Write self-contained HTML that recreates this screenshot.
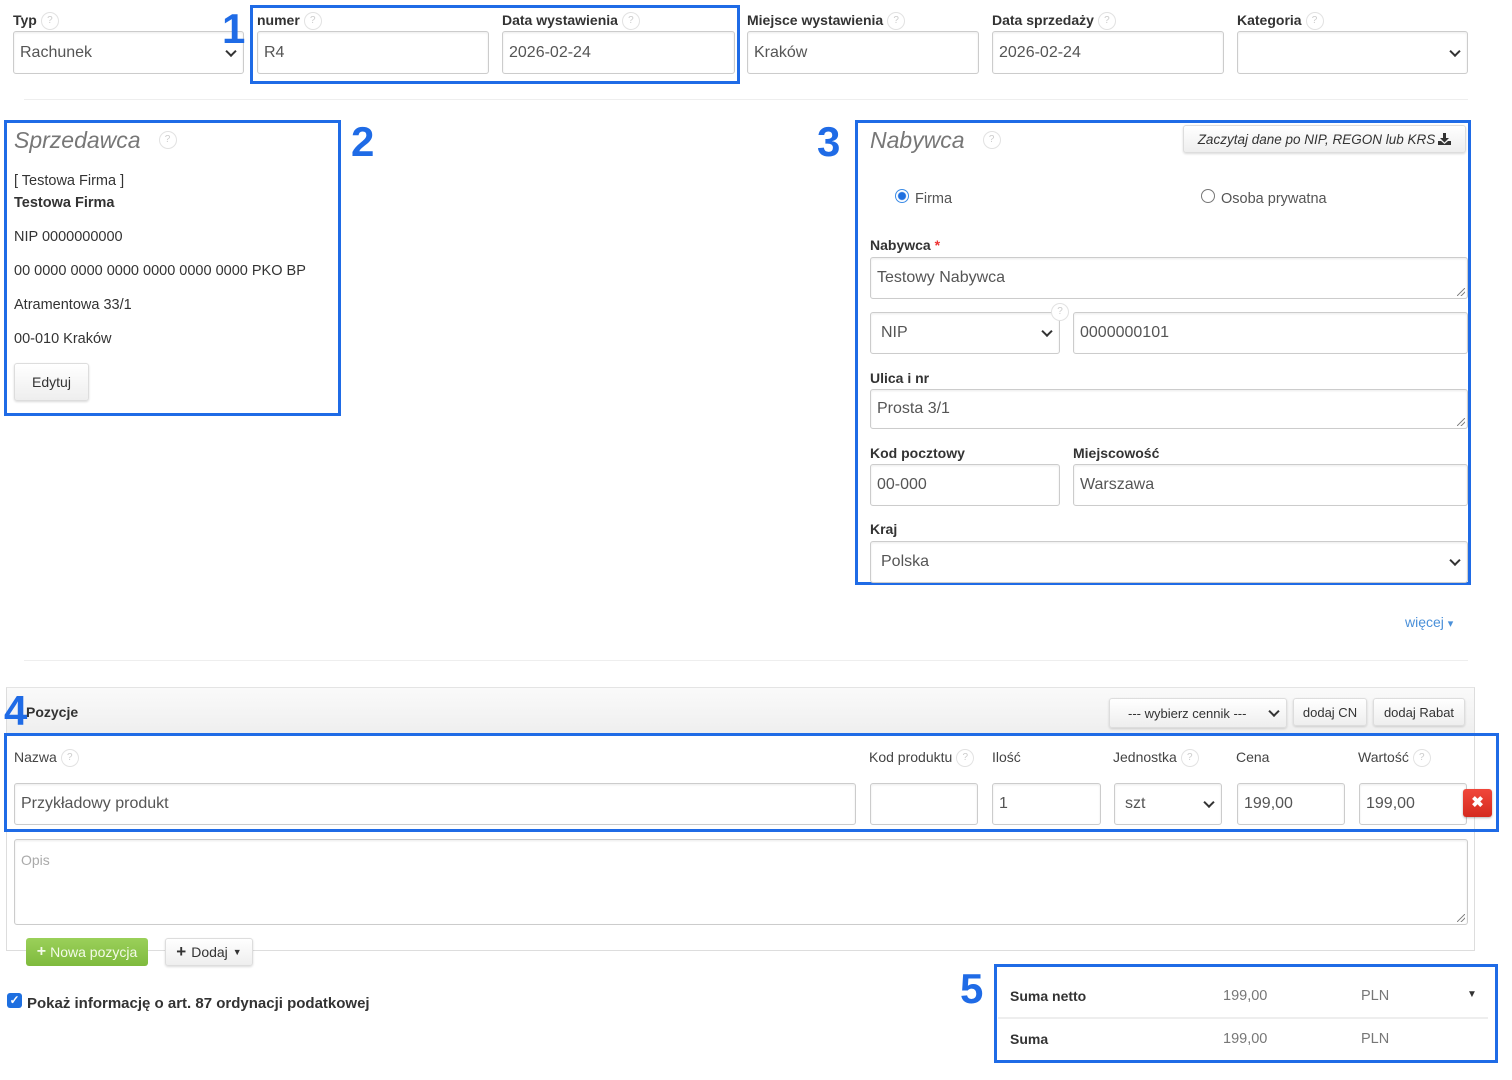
<!DOCTYPE html>
<html><head><meta charset="utf-8"><style>
*{box-sizing:border-box;margin:0;padding:0}
body{width:1512px;height:1080px;background:#fff;position:relative;overflow:hidden;font-family:"Liberation Sans",sans-serif;color:#333}
.a{position:absolute}
.lbl{position:absolute;font-size:14px;font-weight:bold;color:#333;line-height:16px;white-space:nowrap}
.q{display:inline-block;width:18px;height:18px;border:1px solid #e2e2e2;border-radius:50%;font-size:10px;color:#ccc;text-align:center;line-height:16px;font-weight:normal;vertical-align:middle;margin-left:4px;font-style:normal}
.in{position:absolute;border:1px solid #ccc;border-radius:3px;background:#fff;box-shadow:inset 0 1px 2px rgba(0,0,0,.08);font-size:16px;color:#555;padding-left:6px;display:flex;align-items:center;white-space:nowrap}
.sel::after{content:"";position:absolute;right:8px;top:50%;width:6px;height:6px;border-right:2px solid #333;border-bottom:2px solid #333;transform:translateY(-70%) rotate(45deg)}
.box{position:absolute;border:3px solid #1f6be6}
.num{position:absolute;font-size:42px;font-weight:bold;color:#1f6be6;line-height:42px}
.t{position:absolute;font-size:14.5px;color:#333;white-space:nowrap;line-height:16px}
.btn{position:absolute;border:1px solid #ddd;border-radius:3px;background:linear-gradient(#fff,#eee);box-shadow:0 1px 2px rgba(0,0,0,.15);font-size:14px;color:#333;display:flex;align-items:center;justify-content:center;white-space:nowrap}
.rs::before{content:"";position:absolute;right:2px;bottom:2px;width:8px;height:8px;background:linear-gradient(135deg,transparent 45%,#888 45%,#888 55%,transparent 55%,transparent 70%,#888 70%,#888 80%,transparent 80%)}
.cl{position:absolute;font-size:14px;color:#444;white-space:nowrap;line-height:16px}
</style></head><body>

<div class="lbl" style="left:13px;top:12px">Typ<span class="q">?</span></div>
<div class="in sel" style="left:13px;top:31px;width:231px;height:43px">Rachunek</div>
<div class="box" style="left:250px;top:5px;width:490px;height:79px"></div>
<div class="num" style="left:222px;top:8px">1</div>
<div class="lbl" style="left:257px;top:12px">numer<span class="q">?</span></div>
<div class="in" style="left:257px;top:31px;width:232px;height:43px">R4</div>
<div class="lbl" style="left:502px;top:12px">Data wystawienia<span class="q">?</span></div>
<div class="in" style="left:502px;top:31px;width:233px;height:43px">2026-02-24</div>
<div class="lbl" style="left:747px;top:12px">Miejsce wystawienia<span class="q">?</span></div>
<div class="in" style="left:747px;top:31px;width:232px;height:43px">Kraków</div>
<div class="lbl" style="left:992px;top:12px">Data sprzedaży<span class="q">?</span></div>
<div class="in" style="left:992px;top:31px;width:232px;height:43px">2026-02-24</div>
<div class="lbl" style="left:1237px;top:12px">Kategoria<span class="q">?</span></div>
<div class="in sel" style="left:1237px;top:31px;width:231px;height:43px"></div>
<div class="a" style="left:24px;top:99px;width:1444px;height:1px;background:#eee"></div>

<div class="box" style="left:4px;top:120px;width:337px;height:296px"></div>
<div class="num" style="left:351px;top:121px">2</div>
<div class="a" style="left:14px;top:127px;font-size:23px;font-style:italic;color:#777">Sprzedawca<span class="q" style="margin-left:18px;vertical-align:top;margin-top:4px">?</span></div>
<div class="t" style="left:14px;top:173px">[ Testowa Firma ]</div>
<div class="t" style="left:14px;top:195px;font-weight:bold">Testowa Firma</div>
<div class="t" style="left:14px;top:229px">NIP 0000000000</div>
<div class="t" style="left:14px;top:263px">00 0000 0000 0000 0000 0000 0000 PKO BP</div>
<div class="t" style="left:14px;top:297px">Atramentowa 33/1</div>
<div class="t" style="left:14px;top:331px">00-010 Kraków</div>
<div class="btn" style="left:14px;top:363px;width:75px;height:38px">Edytuj</div>

<div class="box" style="left:855px;top:120px;width:616px;height:465px"></div>
<div class="num" style="left:817px;top:121px">3</div>
<div class="a" style="left:870px;top:127px;font-size:23px;font-style:italic;color:#777">Nabywca<span class="q" style="margin-left:18px;vertical-align:top;margin-top:4px">?</span></div>
<div class="btn" style="left:1183px;top:125px;width:283px;height:28px;font-style:italic;font-size:13.5px">Zaczytaj dane po NIP, REGON lub KRS <svg width="13" height="12" viewBox="0 0 13 12" style="margin-left:3px"><path d="M5 0h3v5h3L6.5 9.5 2 5h3z" fill="#333"/><path d="M0 8h3l3.5 3 3.5-3h3v4H0z" fill="#333"/></svg></div>
<div class="a" style="left:895px;top:189px;width:14px;height:14px;border-radius:50%;border:1px solid #3b8be6;background:radial-gradient(#1e6fe0 0 3.5px,#fff 4.5px)"></div>
<div class="t" style="left:915px;top:191px;color:#555">Firma</div>
<div class="a" style="left:1201px;top:189px;width:14px;height:14px;border-radius:50%;border:1px solid #777;background:#fff"></div>
<div class="t" style="left:1221px;top:191px;color:#555">Osoba prywatna</div>
<div class="lbl" style="left:870px;top:237px">Nabywca <span style="color:#e33">*</span></div>
<div class="in rs" style="left:870px;top:257px;width:598px;height:42px">Testowy Nabywca</div>
<div class="in sel" style="left:870px;top:312px;width:190px;height:42px;padding-left:10px">NIP</div>
<span class="q a" style="left:1047px;top:303px;background:#fff">?</span>
<div class="in" style="left:1073px;top:312px;width:395px;height:42px">0000000101</div>
<div class="lbl" style="left:870px;top:370px">Ulica i nr</div>
<div class="in rs" style="left:870px;top:389px;width:598px;height:40px">Prosta 3/1</div>
<div class="lbl" style="left:870px;top:445px">Kod pocztowy</div>
<div class="lbl" style="left:1073px;top:445px">Miejscowość</div>
<div class="in" style="left:870px;top:464px;width:190px;height:42px">00-000</div>
<div class="in" style="left:1073px;top:464px;width:395px;height:42px">Warszawa</div>
<div class="lbl" style="left:870px;top:521px">Kraj</div>
<div class="in sel" style="left:870px;top:541px;width:598px;height:42px;padding-left:10px">Polska</div>
<div class="a" style="left:1405px;top:614px;font-size:14px;color:#4a90d9">więcej <span style="font-size:11px">&#9662;</span></div>
<div class="a" style="left:24px;top:660px;width:1444px;height:1px;background:#eee"></div>

<div class="a" style="left:6px;top:687px;width:1469px;height:264px;border:1px solid #ddd;border-top:1px solid #e4e4e4"></div>
<div class="a" style="left:7px;top:688px;width:1467px;height:45px;background:linear-gradient(#fafafa,#efefef)"></div>
<div class="num" style="left:4px;top:690px">4</div>
<div class="lbl" style="left:26px;top:704px">Pozycje</div>
<div class="btn sel" style="left:1109px;top:698px;width:178px;height:30px;justify-content:flex-start;padding-left:18px;font-size:13px">--- wybierz cennik ---</div>
<div class="btn" style="left:1293px;top:698px;width:74px;height:28px;font-size:13px">dodaj CN</div>
<div class="btn" style="left:1373px;top:698px;width:92px;height:28px;font-size:13px">dodaj Rabat</div>
<div class="box" style="left:4px;top:733px;width:1495px;height:99px"></div>
<div class="cl" style="left:14px;top:749px">Nazwa<span class="q">?</span></div>
<div class="cl" style="left:869px;top:749px">Kod produktu<span class="q">?</span></div>
<div class="cl" style="left:992px;top:749px">Ilość</div>
<div class="cl" style="left:1113px;top:749px">Jednostka<span class="q">?</span></div>
<div class="cl" style="left:1236px;top:749px">Cena</div>
<div class="cl" style="left:1358px;top:749px">Wartość<span class="q">?</span></div>
<div class="in" style="left:14px;top:783px;width:842px;height:42px">Przykładowy produkt</div>
<div class="in" style="left:870px;top:783px;width:108px;height:42px"></div>
<div class="in" style="left:992px;top:783px;width:109px;height:42px">1</div>
<div class="in sel" style="left:1114px;top:783px;width:108px;height:42px;padding-left:10px">szt</div>
<div class="in" style="left:1237px;top:783px;width:108px;height:42px">199,00</div>
<div class="in" style="left:1359px;top:783px;width:108px;height:42px">199,00</div>
<div class="a" style="left:1463px;top:789px;width:29px;height:28px;background:linear-gradient(#f0473b,#d52a1f);border-radius:3px;color:#fff;font-weight:bold;font-size:15px;text-align:center;line-height:28px;box-shadow:0 1px 2px rgba(0,0,0,.3)">&#10006;</div>
<div class="in rs" style="left:14px;top:839px;width:1454px;height:86px;align-items:flex-start;padding-top:12px;font-size:14px;color:#aaa">Opis</div>
<div class="a" style="left:26px;top:938px;width:122px;height:28px;background:linear-gradient(#9bd05a,#7fba3d);border-radius:3px;color:#f3fbe8;font-size:14px;display:flex;align-items:center;justify-content:center"><b style="font-size:16px;margin-right:4px">+</b>Nowa pozycja</div>
<div class="btn" style="left:165px;top:938px;width:88px;height:28px"><b style="font-size:17px;margin-right:5px">+</b>Dodaj <span style="font-size:9px;margin-left:5px">&#9660;</span></div>

<div class="a" style="left:7px;top:993px;width:15px;height:15px;border-radius:3px;background:#1e6fe0;color:#fff;font-size:12px;line-height:15px;text-align:center;font-weight:bold">&#10003;</div>
<div class="lbl" style="left:27px;top:996px;font-size:15px">Pokaż informację o art. 87 ordynacji podatkowej</div>

<div class="box" style="left:994px;top:964px;width:504px;height:99px"></div>
<div class="num" style="left:960px;top:968px">5</div>
<div class="lbl" style="left:1010px;top:988px">Suma netto</div>
<div class="cl" style="left:1223px;top:988px;color:#777;font-size:14.5px">199,00</div>
<div class="cl" style="left:1361px;top:988px;color:#777;font-size:14.5px">PLN</div>
<div class="a" style="left:1467px;top:989px;font-size:10px">&#9660;</div>
<div class="a" style="left:998px;top:1017px;width:490px;height:2px;background:#eee"></div>
<div class="lbl" style="left:1010px;top:1031px">Suma</div>
<div class="cl" style="left:1223px;top:1031px;color:#777;font-size:14.5px">199,00</div>
<div class="cl" style="left:1361px;top:1031px;color:#777;font-size:14.5px">PLN</div>
</body></html>
